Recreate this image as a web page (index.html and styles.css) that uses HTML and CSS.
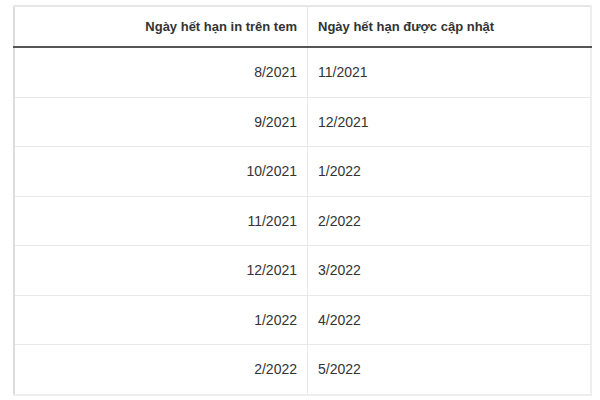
FILE: index.html
```html
<!DOCTYPE html>
<html lang="vi">
<head>
<meta charset="utf-8">
<link rel="stylesheet" href="styles.css">
</head>
<body>
<div class="wrap">
<table class="tbl">
<thead>
<tr><th class="c1">Ngày hết hạn in trên tem</th><th class="c2">Ngày hết hạn được cập nhật</th></tr>
</thead>
<tbody>
<tr><td class="c1">8/2021</td><td class="c2">11/2021</td></tr>
<tr><td class="c1">9/2021</td><td class="c2">12/2021</td></tr>
<tr><td class="c1">10/2021</td><td class="c2">1/2022</td></tr>
<tr><td class="c1">11/2021</td><td class="c2">2/2022</td></tr>
<tr><td class="c1">12/2021</td><td class="c2">3/2022</td></tr>
<tr><td class="c1">1/2022</td><td class="c2">4/2022</td></tr>
<tr><td class="c1">2/2022</td><td class="c2">5/2022</td></tr>
</tbody>
</table>
</div>
</body>
</html>
```
FILE: styles.css
```css
html, body { margin: 0; padding: 0; background: #fff; }
.wrap { padding: 5px 0 0 13px; }
.tbl {
  width: 579px;
  border-collapse: collapse;
  table-layout: fixed;
  font-family: "Liberation Sans", Arial, sans-serif;
  color: #333;
  border-left: 2px solid #ddd;
  border-top: 2px solid #e6e6e6;
  border-right: 2px solid #eee;
  border-bottom: 2px solid #eee;
}
.tbl th {
  height: 39px;
  font-size: 13px;
  font-weight: bold;
  color: #333;
  border-bottom: 2px solid #555;
  padding: 0 10px;
}
.tbl td {
  height: 48.5px;
  font-size: 14px;
  border-top: 1px solid #e8e8e8;
  padding: 0 10px;
}
.tbl .c1 { width: 272px; text-align: right; border-right: 1px solid #e8e8e8; }
.tbl .c2 { text-align: left; }
```
